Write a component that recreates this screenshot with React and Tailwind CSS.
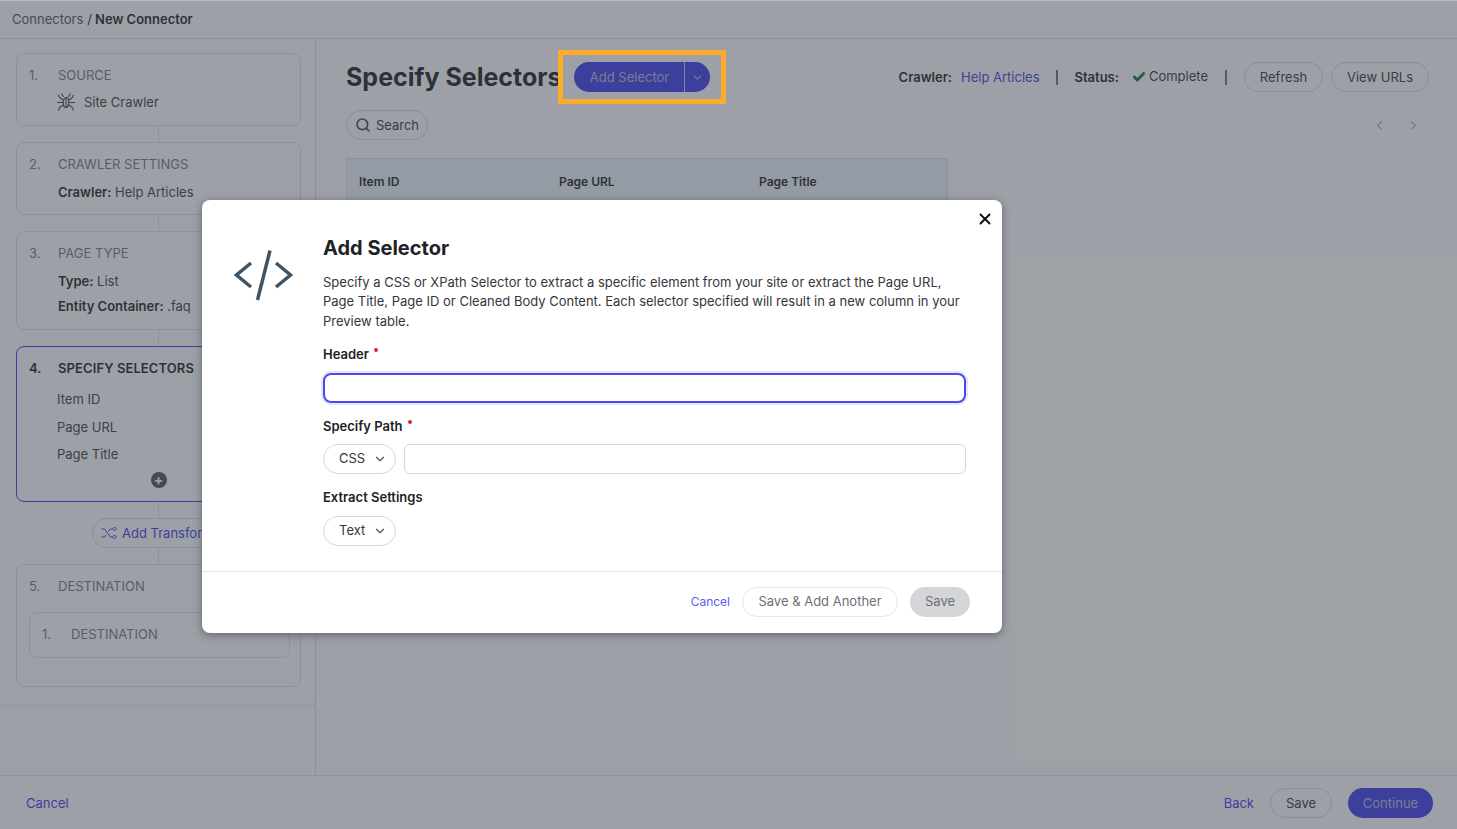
import React from "react";
import { Check, ChevronDown, ChevronLeft, ChevronRight, Search, X } from "lucide-react";

const BugIcon = () => (
  <svg width="20" height="20" viewBox="0 0 20 20" fill="none" stroke="#2f4454" strokeWidth="1.100" className="shrink-0">
    <ellipse cx="10" cy="10.5" rx="2.800" ry="5" />
    <path d="M10 5.500v10M7.500 5 5.500 1.500M12.500 5l2-3.500M7 8 3.500 5.500 2.500 3M13 8l3.500-2.500 1-2.500M7 10.500H1M13 10.500h6M7 13l-3.500 2.500-1 3M13 13l3.500 2.500 1 3" />
  </svg>
);

const CodeIcon = () => (
  <svg width="60" height="54" viewBox="0 0 60 54" fill="none" stroke="#3f5566" strokeWidth="3.500" className="shrink-0">
    <path d="M17 15 2.500 27 17 39M42 15l14.500 12L42 39" />
    <path d="M36 2.500 23.500 52" />
  </svg>
);

const ShuffleIcon = () => (
  <svg width="16" height="14" viewBox="0 0 16 14" fill="none" stroke="#3d3de8" strokeWidth="1" className="shrink-0">
    <path d="M0.500 3h3l6 8h2M0.500 11h3l1.500-2M7.500 5.500 9.500 3h2" />
    <path d="m13.500 1 2 2-2 2-2-2zM13.500 9l2 2-2 2-2-2z" />
  </svg>
);

const Step = ({ num, title, active, children, className }) => (
  <div
    className={
      "rounded-lg border pl-3 pr-[10px] " +
      (active ? "border-[#3d3de8] " : "border-[#dfe1e5] ") +
      (className || "")
    }
  >
    <div className={"flex text-[13px] leading-5 " + (active ? "font-semibold tracking-[0.1px] text-[#1e1e22]" : "text-[#77787c]")}>
      <span className="w-[29px]">{num}</span>
      <span>{title}</span>
    </div>
    {children}
  </div>
);

const Connector = () => <div className="mx-auto h-4 w-px bg-[#dfe1e5]" />;

const Detail = ({ label, value, className }) => (
  <div className={"pl-[29px] text-[13px] leading-5 text-[#3c3d42] " + (className || "")}>
    <span className="font-semibold text-[#1e1e22]">{label}</span> {value}
  </div>
);

const Selector = ({ children, className }) => (
  <div className={"pl-[28px] text-[13px] leading-5 text-[#3c3d42] " + (className || "")}>{children}</div>
);

const Pill = ({ children, className }) => (
  <button className={"flex h-[30px] items-center justify-center rounded-full border border-[#d9dbdf] text-[13px] leading-5 text-[#35363b] " + (className || "")}>
    {children}
  </button>
);

const Label = ({ children, required, className }) => (
  <div className={"flex text-[13px] font-semibold leading-5 text-[#212226] " + (className || "")}>
    {children}
    {required && <span className="ml-[5px] h-[3px] w-[3px] translate-y-[4px] rounded-full bg-[#e0203c] p-[2px]" />}
  </div>
);

const SelectPill = ({ children, className }) => (
  <div className={"flex h-[30px] w-[73px] shrink-0 items-center rounded-full border border-[#d5d7da] pl-[15px] text-[13px] text-[#35363b] " + (className || "")}>
    <span className="w-[34px]">{children}</span>
    <ChevronDown size={14} strokeWidth={2} className="text-[#3f5566]" />
  </div>
);

export default function App() {
  return (
    <div className="relative flex h-[829px] w-[1457px] flex-col overflow-hidden bg-white font-['Inter',sans-serif]">
      {/* page under the dimmed overlay */}
      <header className="flex h-[39px] shrink-0 items-center border-b border-[#dfe1e5] px-3 text-[13px] leading-5 text-[#50525a]">
        Connectors <span className="ml-1 mr-[3px] text-[#1e1e22]">/</span>
        <span className="font-semibold text-[#1e1e22]">New Connector</span>
      </header>

      <div className="flex min-h-0 flex-1">
        <aside className="w-[316px] shrink-0 border-r border-[#dfe1e5]">
          <div className="pl-4 pr-[14px] pt-[14px]">
            <Step num="1." title="SOURCE" className="h-[73px] pt-[11px]">
              <div className="mt-[7px] flex items-center gap-[8px] pl-[27px] text-[13px] leading-5 text-[#3c3d42]">
                <BugIcon />
                Site Crawler
              </div>
            </Step>
            <Connector />
            <Step num="2." title="CRAWLER SETTINGS" className="h-[73px] pt-[11px]">
              <Detail label="Crawler:" value="Help Articles" className="mt-2" />
            </Step>
            <Connector />
            <Step num="3." title="PAGE TYPE" className="h-[99px] pt-[11px]">
              <Detail label="Type:" value="List" className="mt-2" />
              <Detail label="Entity Container:" value=".faq" className="mt-[5px]" />
            </Step>
            <Connector />
            <Step num="4." title="SPECIFY SELECTORS" active className="relative h-[156px] pt-[11px]">
              <Selector className="mt-[11px]">Item ID</Selector>
              <Selector className="mt-2">Page URL</Selector>
              <Selector className="mt-[7px]">Page Title</Selector>
              <div className="mt-2 flex justify-center pr-[2px]">
                <span className="flex h-4 w-4 items-center justify-center rounded-full bg-[#3f5566] text-[14px] font-bold leading-none text-white">+</span>
              </div>
            </Step>
            <Connector />
            <div className="ml-[76px] flex h-[30px] w-[220px] items-center gap-[5px] rounded-full border border-[#d9dbdf] pl-2 text-[13px] leading-5 text-[#3d3de8]">
              <ShuffleIcon />
              Add Transform
            </div>
            <Connector />
            <Step num="5." title="DESTINATION" className="h-[123px] pt-[11px]">
              <div className="mt-[16px] h-[46px] rounded-lg border border-[#dfe1e5] px-3 pt-[11px]">
                <div className="flex text-[13px] leading-5 text-[#77787c]">
                  <span className="w-[29px]">1.</span>
                  <span>DESTINATION</span>
                </div>
              </div>
            </Step>
          </div>
          <div className="mt-4 h-1 bg-[#f0f5fa]" />
        </aside>

        <main className="min-w-0 flex-1 pl-[30px] pr-[28px] pt-[23px]">
          <div className="flex h-[30px] items-center">
            <h1 className="w-[228px] shrink-0 whitespace-nowrap text-[25px] font-bold leading-none text-[#1e1e22]">Specify Selectors</h1>
            <div className="flex h-[30px] w-[136px] shrink-0 items-center rounded-full bg-[#3d3de8] text-[13px] leading-5 text-[#b9b9d8]">
              <span className="w-[110px] pl-[1px] text-center">Add Selector</span>
              <span className="flex h-full flex-1 items-center justify-center border-l border-[#c8c8e8]">
                <ChevronDown size={13} strokeWidth={2} />
              </span>
            </div>
            <div className="ml-auto flex items-center text-[13px] leading-5">
              <span className="font-semibold text-[#1e1e22]">Crawler:</span>
              <span className="ml-[9px] text-[#3d3de8]">Help Articles</span>
              <span className="ml-4 h-[15px] w-[2px] bg-[#70727a]" />
              <span className="ml-[17px] font-semibold text-[#1e1e22]">Status:</span>
              <Check size={14} strokeWidth={5} className="ml-[13px] text-[#0a7a3a]" />
              <span className="ml-[3px] -translate-y-px text-[#35363b]">Complete</span>
              <span className="ml-[17px] h-[15px] w-[2px] bg-[#70727a]" />
              <Pill className="ml-[17px] w-[79px]">Refresh</Pill>
              <Pill className="ml-2 w-[98px]">View URLs</Pill>
            </div>
          </div>

          <div className="mt-[18px] flex items-center justify-between">
            <Pill className="w-[82px] gap-[5px]">
              <Search size={16} strokeWidth={2.500} className="text-[#4c4d52]" />
              Search
            </Pill>
            <div className="flex items-center gap-[19px] pr-[8px] text-[#b0b2b6]">
              <ChevronLeft size={15} strokeWidth={1.800} />
              <ChevronRight size={15} strokeWidth={1.800} />
            </div>
          </div>

          <div className="mt-[18px] h-[60px] w-[602px] border border-[#dfe1e5] bg-[#eef4fb]">
            <div className="flex pl-3 pt-[13px] text-[12px] font-semibold leading-5 text-[#1e1e22]">
              <span className="w-[200px]">Item ID</span>
              <span className="w-[200px]">Page URL</span>
              <span>Page Title</span>
            </div>
          </div>
        </main>
      </div>

      <footer className="flex h-[54px] shrink-0 items-center border-t border-[#dfe1e5] pl-[26px] pr-6 text-[13px] leading-5">
        <span className="text-[#3d3de8]">Cancel</span>
        <span className="ml-auto text-[#3d3de8]">Back</span>
        <Pill className="ml-[16px] w-[62px] border-[#c8cace]">Save</Pill>
        <button className="ml-[16px] h-[30px] w-[85px] rounded-full bg-[#3d3de8] text-[#b9b9d8]">Continue</button>
      </footer>

      {/* dim layer, the callout sits above it and the modal above that */}
      <div className="absolute inset-x-0 bottom-0 top-px bg-[#3c424d]/50" />
      <div className="absolute left-0 right-0 top-0 h-px bg-[#b9bcc0]" />
      <div className="absolute left-[558px] top-[50px] h-[54px] w-[168px] border-[5px] border-[#fdab2a]" />

      <div className="absolute left-[202px] top-[200px] flex h-[433px] w-[800px] flex-col rounded-lg bg-white shadow-[0_2px_8px_rgba(30,35,45,0.45)]">
        <button className="absolute right-[8px] top-[10px] text-[#111]">
          <X size={18} strokeWidth={2.500} />
        </button>
        <div className="flex flex-1 pl-[32px] pr-[36px]">
          <div className="w-[89px] shrink-0 pt-[48px]">
            <CodeIcon />
          </div>
          <div className="min-w-0 flex-1 pt-[36px]">
            <h2 className="text-[20px] font-bold leading-6 text-[#212226]">Add Selector</h2>
            <p className="mt-[12px] pt-[0.6px] text-[13px] leading-[19.5px] text-[#35363b]">
              Specify a CSS or XPath Selector to extract a specific element from your site or extract the Page URL,
              Page Title, Page ID or Cleaned Body Content. Each selector specified will result in a new column in your
              Preview table.
            </p>
            <Label required className="mt-[13px]">Header</Label>
            <div className="mt-[9px] h-[30px] rounded-lg border-2 border-[#4a4ae8] shadow-[0_0_0_2px_#e6e6fb]" />
            <Label required className="mt-[13px]">Specify Path</Label>
            <div className="mt-2 flex gap-2">
              <SelectPill>CSS</SelectPill>
              <div className="h-[30px] flex-1 rounded-md border border-[#d5d7da]" />
            </div>
            <Label className="mt-[13px]">Extract Settings</Label>
            <SelectPill className="mt-[9px]">Text</SelectPill>
          </div>
        </div>
        <div className="flex h-[62px] shrink-0 items-center justify-end border-t border-[#e5e6e8] pb-[2px] pr-[32px] text-[13px] leading-5">
          <span className="text-[12px] text-[#5b5bf0]">Cancel</span>
          <button className="ml-3 h-[30px] w-[156px] rounded-full border border-[#e5e6e8] pb-[2px] text-[#6f7075]">Save &amp; Add Another</button>
          <button className="ml-3 h-[30px] w-[60px] rounded-full bg-[#d4d5d8] pb-[2px] text-[#6f7075]">Save</button>
        </div>
      </div>
    </div>
  );
}
